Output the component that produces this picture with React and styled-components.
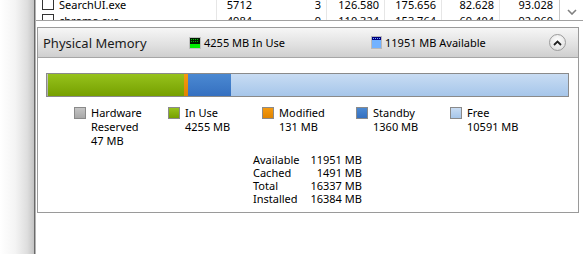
import React from 'react';
import styled, { createGlobalStyle } from 'styled-components';

const GlobalStyle = createGlobalStyle`
    html, body {
        margin: 0;
        padding: 0;
        background: #ffffff;
    }
    body {
        font-family: "Noto Sans", "Liberation Sans", sans-serif;
        font-size: 11px;
        color: #000;
    }
`;

const processes = [
    { name: 'SearchUI.exe', pid: '5712', faults: '3', commit: '126.580', working: '175.656', share: '82.628', priv: '93.028' },
    { name: 'chrome.exe', pid: '4984', faults: '9', commit: '110.324', working: '153.764', share: '69.404', priv: '92.960' },
];

const memory = [
    { key: 'hw', label: ['Hardware', 'Reserved'], mb: 47, color: 'linear-gradient(#c4c4c4, #a8a8a8)' },
    { key: 'use', label: ['In Use'], mb: 4255, color: 'linear-gradient(#96c21c, #76a000)' },
    { key: 'mod', label: ['Modified'], mb: 131, color: 'linear-gradient(#f59a10, #e08400)' },
    { key: 'stand', label: ['Standby'], mb: 1360, color: 'linear-gradient(#4b89d2, #3570c0)' },
    { key: 'free', label: ['Free'], mb: 10591, color: 'linear-gradient(#c8dcf3, #a6c6ea)' },
];

const stats = [
    ['Available', '11951 MB'],
    ['Cached', '1491 MB'],
    ['Total', '16337 MB'],
    ['Installed', '16384 MB'],
];

const Screen = styled.div`
    display: flex;
    width: 583px;
    height: 254px;
    overflow: hidden;
    background: #fff;
`;

const Shadow = styled.div`
    width: 34px;
    flex-shrink: 0;
    background: linear-gradient(to right, #ffffff 0%, #f4f4f4 45%, #dedede 80%, #c4c4c4 100%);
    border-right: 1px solid #6a6a6a;
    box-shadow: 1px 0 0 #b4b4b4;
`;

const Main = styled.div`
    flex: 1;
    display: flex;
    flex-direction: column;
    margin-left: 1px;
`;

const TableArea = styled.div`
    display: flex;
    height: 20px;
    flex-shrink: 0;
    border-bottom: 1px solid #a0a0a0;
    overflow: hidden;
`;

const Rows = styled.div`
    width: 523px;
    margin-top: -3px;
`;

const Row = styled.div`
    display: grid;
    grid-template-columns: 181px 40px 70px 58px 57px 58px 58px;
    height: 16px;
    align-items: center;
`;

const Cell = styled.div`
    height: 16px;
    line-height: 16px;
    padding-right: ${p => (p.$name ? 0 : 5)}px;
    padding-left: ${p => (p.$name ? 6 : 0)}px;
    border-right: ${p => (p.$sep ? '1px solid #e6e6e6' : 'none')};
    box-sizing: border-box;
    display: flex;
    align-items: center;
    justify-content: ${p => (p.$name ? 'flex-start' : 'flex-end')};
    gap: 5px;
    white-space: nowrap;
`;

const Check = styled.span`
    width: 10px;
    height: 10px;
    border: 1px solid #333;
    background: #fff;
    flex-shrink: 0;
    margin-top: -3px;
`;

const ScrollBar = styled.div`
    flex: 1;
    border-left: 1px solid #c8c8c8;
    display: flex;
    justify-content: center;
    padding-top: 9px;
    box-sizing: border-box;
`;

const Panel = styled.section`
    margin-top: 6px;
    margin-left: 1px;
    width: 542px;
    height: 186px;
    flex-shrink: 0;
    box-sizing: border-box;
    border: 1px solid #9a9a9a;
    display: flex;
    flex-direction: column;
    overflow: hidden;
`;

const Header = styled.div`
    display: grid;
    grid-template-columns: 146px 182px 1fr 17px;
    align-items: center;
    height: 29px;
    flex-shrink: 0;
    padding: 0 12px 0 5px;
    background: linear-gradient(#f6f6f6, #e2e2e2 55%, #cfcfcf);
    border-bottom: 1px solid #a6a6a6;
`;

const Title = styled.div`
    font-size: 13px;
    color: #1a1a1a;
    padding-top: 1px;
`;

const Summary = styled.div`
    display: flex;
    align-items: center;
    gap: 3px;
    font-size: 11px;
    white-space: nowrap;
`;

const RoundButton = styled.div`
    width: 17px;
    height: 17px;
    box-sizing: border-box;
    border-radius: 50%;
    border: 1px solid #9c9c9c;
    background: radial-gradient(circle at 50% 35%, #ffffff, #e4e4e4 70%, #d0d0d0);
    display: flex;
    align-items: center;
    justify-content: center;
`;

const Body = styled.div`
    padding: 15px 9px 0 8px;
`;

const Bar = styled.div`
    display: flex;
    height: 24px;
    box-sizing: border-box;
    border: 1px solid #8a8a8a;
    background: #fff;
`;

const Segment = styled.div`
    height: 100%;
    background: ${p => p.$color};
    flex-shrink: 0;
`;

const Legend = styled.div`
    display: flex;
    margin-top: 9px;
    padding-left: 28px;
`;

const LegendItem = styled.div`
    width: 94px;
    display: flex;
    gap: 5px;
    line-height: 14px;
    white-space: nowrap;
`;

const Swatch = styled.span`
    width: 12px;
    height: 12px;
    box-sizing: border-box;
    border: 1px solid #8a8a8a;
    background: ${p => p.$color};
    flex-shrink: 0;
    margin-top: 1px;
`;

const Stats = styled.div`
    display: grid;
    grid-template-columns: auto auto;
    justify-content: start;
    column-gap: 11px;
    line-height: 13px;
    margin: 5px 0 0 207px;
    white-space: nowrap;
`;

const StatValue = styled.div`
    text-align: right;
`;

function InUseIcon() {
    return (
        <svg width="12" height="12" viewBox="0 0 12 12">
            <rect x="0.5" y="0.5" width="11" height="11" fill="#fff" stroke="#c0c0c0" />
            <rect x="1" y="1" width="10" height="6" fill="#001a00" />
            {[2, 4, 6, 8].map(x => [2, 4].map(y => <rect key={`${x}${y}`} x={x} y={y} width="1" height="1" fill="#00c000" />))}
            <rect x="1" y="7" width="10" height="4" fill="#00ee00" />
        </svg>
    );
}

function AvailableIcon() {
    return (
        <svg width="11" height="13" viewBox="0 0 11 13">
            <rect x="0.5" y="0.5" width="10" height="12" fill="#fff" stroke="#b8b8b8" />
            <rect x="1" y="1" width="9" height="3" fill="#000080" />
            {[2, 4, 6, 8].map(x => <rect key={x} x={x} y="2" width="1" height="1" fill="#6fa8ff" />)}
            <rect x="1" y="4" width="9" height="8" fill="#72b2ff" />
        </svg>
    );
}

function App() {
    const total = memory.reduce((s, m) => s + m.mb, 0);

    return (
        <>
            <GlobalStyle />
            <Screen>
                <Shadow />
                <Main>
                    <TableArea>
                        <Rows>
                            {processes.map(p => (
                                <Row key={p.name}>
                                    <Cell $name $sep><Check />{p.name}</Cell>
                                    <Cell>{p.pid}</Cell>
                                    <Cell $sep>{p.faults}</Cell>
                                    <Cell $sep>{p.commit}</Cell>
                                    <Cell $sep>{p.working}</Cell>
                                    <Cell $sep>{p.share}</Cell>
                                    <Cell>{p.priv}</Cell>
                                </Row>
                            ))}
                        </Rows>
                        <ScrollBar>
                            <svg width="10" height="6" viewBox="0 0 10 6">
                                <path d="M1 1 L5 5 L9 1" fill="none" stroke="#808080" strokeWidth="1.6" />
                            </svg>
                        </ScrollBar>
                    </TableArea>

                    <Panel>
                        <Header>
                            <Title>Physical Memory</Title>
                            <Summary><InUseIcon />4255 MB In Use</Summary>
                            <Summary><AvailableIcon />11951 MB Available</Summary>
                            <RoundButton>
                                <svg width="9" height="6" viewBox="0 0 9 6">
                                    <path d="M1 5 L4.5 1.5 L8 5" fill="none" stroke="#222" strokeWidth="1.8" />
                                </svg>
                            </RoundButton>
                        </Header>
                        <Body>
                            <Bar>
                                {memory.map(m => (
                                    <Segment
                                        key={m.key}
                                        $color={m.color}
                                        style={{ width: `${(m.mb / total) * 100}%` }}
                                    />
                                ))}
                            </Bar>
                            <Legend>
                                {memory.map(m => (
                                    <LegendItem key={m.key}>
                                        <Swatch $color={m.color} />
                                        <div>
                                            {m.label.map(l => <div key={l}>{l}</div>)}
                                            <div>{m.mb} MB</div>
                                        </div>
                                    </LegendItem>
                                ))}
                            </Legend>
                            <Stats>
                                {stats.map(([label, value]) => (
                                    <React.Fragment key={label}>
                                        <div>{label}</div>
                                        <StatValue>{value}</StatValue>
                                    </React.Fragment>
                                ))}
                            </Stats>
                        </Body>
                    </Panel>
                </Main>
            </Screen>
        </>
    );
}

export default App;
